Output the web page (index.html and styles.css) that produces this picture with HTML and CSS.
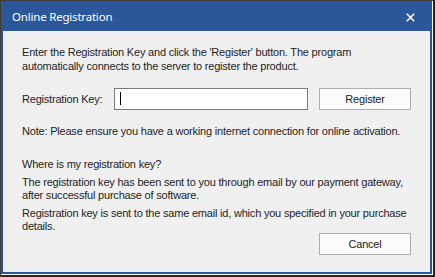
FILE: index.html
```html
<!DOCTYPE html>
<html>
<head>
<meta charset="utf-8">
<link rel="stylesheet" href="styles.css">
</head>
<body>
<div class="frame">
  <div class="hl">
    <div class="win">
      <div class="titlebar">
        <span class="title">Online Registration</span>
        <svg class="close" width="9" height="9" viewBox="0 0 9 9"><path d="M0.8 0.8 L8.2 8.2 M8.2 0.8 L0.8 8.2" stroke="#fff" stroke-width="1.6" fill="none"/></svg>
      </div>
      <div class="content">
        <p class="p1">Enter the Registration Key and click the 'Register' button. The program<br>automatically connects to the server to register the product.</p>
        <div class="keyrow">
          <span class="label">Registration Key:</span>
          <div class="input"><span class="caret"></span></div>
          <div class="btn">Register</div>
        </div>
        <p class="note">Note: Please ensure you have a working internet connection for online activation.</p>
        <p class="where">Where is my registration key?</p>
        <p class="p3">The registration key has been sent to you through email by our payment gateway,<br>after successful purchase of software.</p>
        <p class="p4">Registration key is sent to the same email id, which you specified in your purchase<br>details.</p>
        <div class="btnrow"><div class="btn">Cancel</div></div>
      </div>
    </div>
  </div>
</div>
</body>
</html>
```
FILE: styles.css
```css
html, body {
  margin: 0;
  padding: 0;
  background: #f0f0f0;
}
.frame {
  width: 435px;
  height: 277px;
  box-sizing: border-box;
  border-top: 1px solid #3c3c3c;
  border-left: 1px solid #3c3c3c;
  border-right: 2px solid #262626;
  border-bottom: 2px solid #262626;
  display: flex;
  overflow: hidden;
}
.hl {
  flex: 1;
  min-width: 0;
  display: flex;
  border-right: 1px solid #fafafa;
  border-bottom: 1px solid #fafafa;
}
.win {
  flex: 1;
  min-width: 0;
  display: flex;
  flex-direction: column;
  border-left: 2px solid #2b579a;
  border-right: 2px solid #2b579a;
  border-bottom: 2px solid #2b579a;
  background: #f0f0f0;
}
.titlebar {
  height: 30px;
  flex: none;
  background: #2b579a;
  margin: 0 -2px;
  padding: 0 17px 0 11px;
  display: flex;
  align-items: center;
  justify-content: space-between;
}
.title {
  color: #fff;
  font-family: "Noto Sans", "Open Sans", sans-serif;
  font-size: 11.5px;
  letter-spacing: -0.2px;
  line-height: 16px;
  padding-top: 2px;
}
.close {
  display: block;
  margin-top: 3px;
}
.content {
  flex: 1;
  min-width: 0;
  overflow: hidden;
  padding: 14px 19px 0 19px;
  font-family: "Liberation Sans", Arial, sans-serif;
  font-size: 11px;
  letter-spacing: -0.2px;
  line-height: 14px;
  color: #1e1e1e;
  white-space: nowrap;
}
p {
  margin: 0;
}
.keyrow {
  margin-top: 15px;
  height: 22px;
  display: flex;
  align-items: center;
}
.label {
  width: 92px;
  flex: none;
}
.input {
  width: 194px;
  height: 22px;
  box-sizing: border-box;
  border: 1px solid #7a7a7a;
  background: #fff;
  flex: none;
  padding: 3px 0 0 5px;
}
.caret {
  display: block;
  width: 1px;
  height: 13px;
  background: #000;
}
.btn {
  width: 92px;
  height: 22px;
  box-sizing: border-box;
  border: 1px solid #adadad;
  background: #fcfcfc;
  display: flex;
  align-items: center;
  justify-content: center;
  color: #222;
  flex: none;
  margin-left: 11px;
}
.note {
  margin-top: 14px;
}
.where {
  margin-top: 19px;
}
.p3 {
  margin-top: 5px;
  line-height: 13px;
}
.p4 {
  margin-top: 5px;
  line-height: 13px;
}
.btnrow {
  display: flex;
  justify-content: flex-end;
}
```
